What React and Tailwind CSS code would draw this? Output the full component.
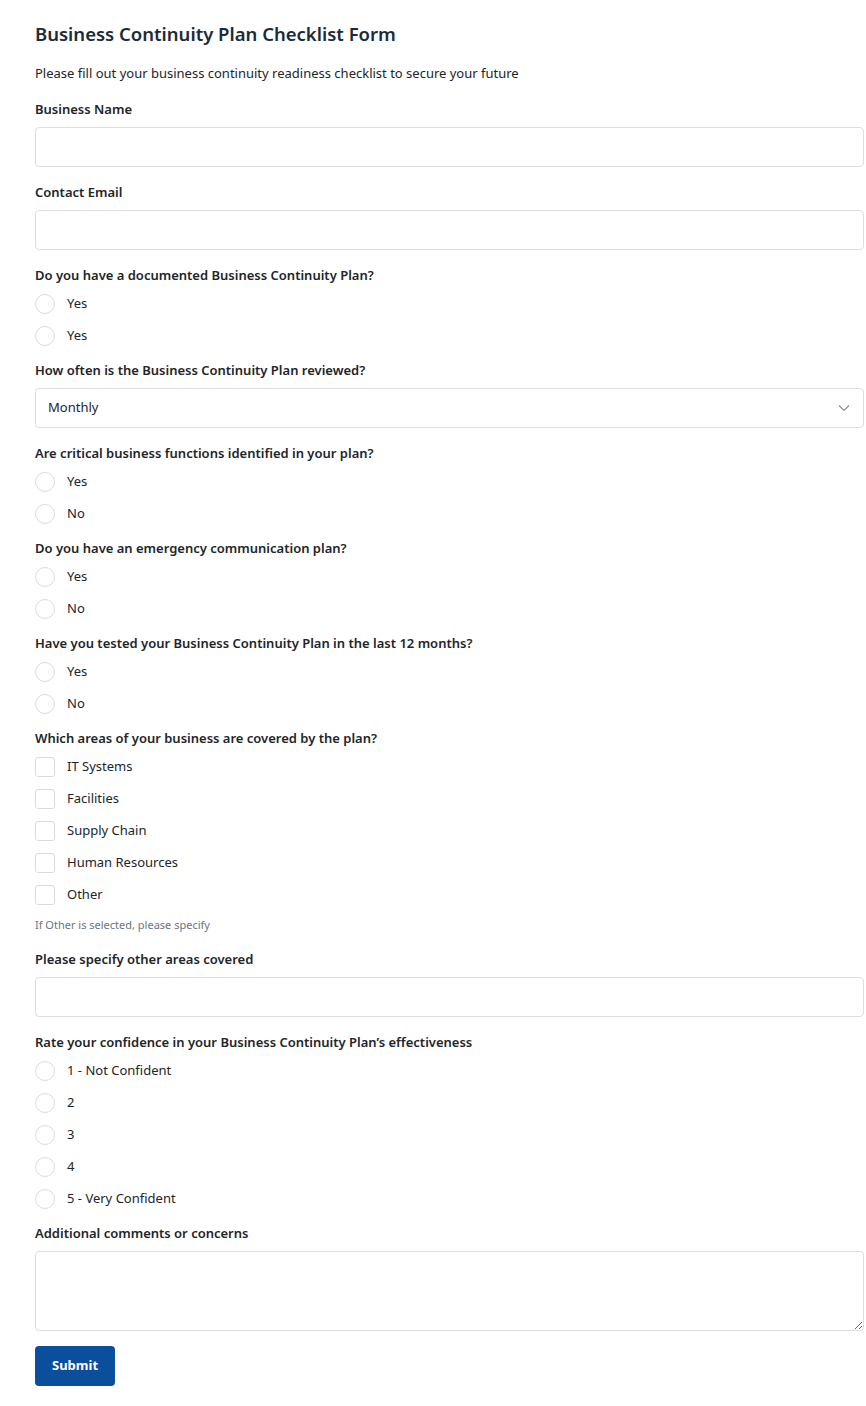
import { useState } from 'react';

const font = { fontFamily: '"Noto Sans", "Open Sans", sans-serif' };

function Label({ children, className = '' }) {
  return (
    <label className={`block text-[13px] leading-5 font-semibold text-[#212529] ${className}`}>
      {children}
    </label>
  );
}

function RadioGroup({ name, label, options }) {
  const [value, setValue] = useState('');
  return (
    <div className="mb-3">
      <Label className="mb-[7px]">{label}</Label>
      <div className="flex flex-col gap-2">
        {options.map((opt, i) => (
          <label key={i} className="flex items-center h-6 cursor-pointer">
            <input
              type="radio"
              name={name}
              checked={value === i}
              onChange={() => setValue(i)}
              className="appearance-none w-5 h-5 rounded-full border border-[#d9dcdf] bg-white checked:border-[6px] checked:border-[#0b4f9c]"
            />
            <span className="ml-3 text-[13px] text-[#212529]">{opt}</span>
          </label>
        ))}
      </div>
    </div>
  );
}

function CheckGroup({ label, options }) {
  return (
    <div>
      <Label className="mb-[7px]">{label}</Label>
      <div className="flex flex-col gap-2">
        {options.map((opt) => (
          <label key={opt} className="flex items-center h-6 cursor-pointer">
            <input
              type="checkbox"
              className="appearance-none w-5 h-5 rounded-[3px] border border-[#d9dcdf] bg-white checked:bg-[#0b4f9c] checked:border-[#0b4f9c]"
            />
            <span className="ml-3 text-[13px] text-[#212529]">{opt}</span>
          </label>
        ))}
      </div>
    </div>
  );
}

function TextField({ label, type = 'text' }) {
  return (
    <div className="mb-[15px]">
      <Label className="mb-2">{label}</Label>
      <input
        type={type}
        className="w-full h-10 px-3 rounded-[4px] border border-[#dcdee0] bg-white text-[13px] focus:outline-none"
      />
    </div>
  );
}

export default function App() {
  const [freq, setFreq] = useState('Monthly');

  return (
    <div className="min-h-screen bg-white" style={font}>
      <form
        onSubmit={(e) => e.preventDefault()}
        className="pl-[35px] pr-[2px] pt-5 pb-5 flex flex-col"
      >
        <h1 className="text-[18.5px] leading-7 font-semibold text-[#1c2b39] mb-[15px]">
          Business Continuity Plan Checklist Form
        </h1>
        <p className="text-[13px] leading-5 text-[#212529] mb-4">
          Please fill out your business continuity readiness checklist to secure your future
        </p>

        <TextField label="Business Name" />
        <TextField label="Contact Email" type="email" />

        <RadioGroup name="documented" label="Do you have a documented Business Continuity Plan?" options={['Yes', 'Yes']} />

        <div className="mb-[15px]">
          <Label className="mb-2">How often is the Business Continuity Plan reviewed?</Label>
          <div className="relative">
            <select
              value={freq}
              onChange={(e) => setFreq(e.target.value)}
              className="appearance-none w-full h-10 pl-3 pr-10 rounded-[4px] border border-[#dcdee0] bg-white text-[13px] text-[#212529] focus:outline-none"
            >
              <option>Monthly</option>
              <option>Quarterly</option>
              <option>Annually</option>
              <option>Never</option>
            </select>
            <svg
              className="absolute right-[14px] top-1/2 -translate-y-1/2 pointer-events-none"
              width="12"
              height="8"
              viewBox="0 0 12 8"
              fill="none"
            >
              <path d="M1 1.5l5 5 5-5" stroke="#8a8f94" strokeWidth="1.2" />
            </svg>
          </div>
        </div>

        <RadioGroup name="critical" label="Are critical business functions identified in your plan?" options={['Yes', 'No']} />
        <RadioGroup name="comm" label="Do you have an emergency communication plan?" options={['Yes', 'No']} />
        <RadioGroup name="tested" label="Have you tested your Business Continuity Plan in the last 12 months?" options={['Yes', 'No']} />

        <CheckGroup
          label="Which areas of your business are covered by the plan?"
          options={['IT Systems', 'Facilities', 'Supply Chain', 'Human Resources', 'Other']}
        />
        <p className="text-[11px] leading-4 text-[#6c757d] mt-[10px] mb-4">If Other is selected, please specify</p>

        <TextField label="Please specify other areas covered" />

        <RadioGroup
          name="confidence"
          label="Rate your confidence in your Business Continuity Plan’s effectiveness"
          options={['1 - Not Confident', '2', '3', '4', '5 - Very Confident']}
        />

        <div className="mb-[15px]">
          <Label className="mb-2">Additional comments or concerns</Label>
          <textarea className="block w-full h-20 px-3 py-2 rounded-[4px] border border-[#dcdee0] bg-white text-[13px] focus:outline-none" />
        </div>

        <div>
          <button
            type="submit"
            className="h-10 px-[17px] rounded-[4px] bg-[#0b4f9c] text-white text-[13px] font-bold hover:bg-[#093f7d]"
          >
            Submit
          </button>
        </div>
      </form>
    </div>
  );
}
